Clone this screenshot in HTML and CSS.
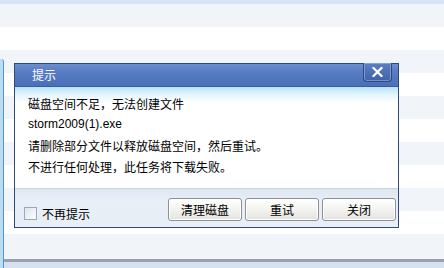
FILE: index.html
```html
<!DOCTYPE html>
<html lang="zh-CN">
<head>
<meta charset="utf-8">
<link rel="stylesheet" href="styles.css">
</head>
<body>
<div class="page">
  <div class="topstrip"></div>
  <div class="rows">
    <div class="row alt"></div>
    <div class="row"></div>
    <div class="row alt"></div>
    <div class="row"></div>
    <div class="row alt"></div>
    <div class="row"></div>
    <div class="row alt"></div>
    <div class="row"></div>
    <div class="row alt"></div>
    <div class="row"></div>
    <div class="row alt last"></div>
  </div>
  <div class="bottombar"></div>
  <div class="sideedge"></div>

  <div class="dialog">
    <div class="titlebar">
      <span class="title">提示</span>
      <button class="close" aria-label="关闭">
        <svg width="11" height="10" viewBox="0 0 11 10"><path d="M1.5 1 L9.5 9 M9.5 1 L1.5 9" stroke="#fff" stroke-width="2.2" stroke-linecap="square"/></svg>
      </button>
    </div>
    <div class="content">
      <p class="line">磁盘空间不足，无法创建文件</p>
      <p class="line file">storm2009(1).exe</p>
      <p class="line">请删除部分文件以释放磁盘空间，然后重试。</p>
      <p class="line">不进行任何处理，此任务将下载失败。</p>
    </div>
    <div class="footer">
      <label class="check"><span class="box"></span>不再提示</label>
      <div class="buttons">
        <button class="btn">清理磁盘</button>
        <button class="btn">重试</button>
        <button class="btn">关闭</button>
      </div>
    </div>
  </div>
</div>
</body>
</html>
```

FILE: styles.css
```css
* { box-sizing: border-box; }
html, body { margin: 0; padding: 0; }
body {
  width: 444px;
  height: 268px;
  overflow: hidden;
  font-family: "Noto Sans CJK SC", "Liberation Sans", sans-serif;
  font-size: 12px;
  color: #000;
  background: #ffffff;
}
.page {
  position: relative;
  width: 444px;
  height: 268px;
  display: flex;
  flex-direction: column;
}
.topstrip { height: 4px; background: #d5e3f4; }
.rows { flex: 1; display: flex; flex-direction: column; }
.row { height: 23px; background: #ffffff; }
.row.alt { background: #f1f4f9; }
.row.last { flex: 1; }
.bottombar {
  height: 9px;
  border-top: 3px solid #96a2b2;
  background: #d8e2ee;
}
.sideedge {
  position: absolute;
  left: 0;
  top: 59px;
  bottom: 0;
  width: 4px;
  background: #bcdcf4;
  border-right: 1px solid #4d95d8;
  border-top-right-radius: 3px;
}

.dialog {
  position: absolute;
  left: 14px;
  top: 63px;
  width: 385px;
  height: 165px;
  border: 1px solid #2e4a76;
  background: #fff;
  display: flex;
  flex-direction: column;
}
.titlebar {
  position: relative;
  height: 23px;
  background: linear-gradient(#6d8fd0 0%, #5a7ec4 30%, #4b6fb7 100%);
  border-bottom: 1px solid #3c5d99;
  display: flex;
  align-items: center;
  padding-left: 17px;
}
.title {
  color: #fff;
  font-size: 12px;
  line-height: 1;
}
.close {
  position: absolute;
  top: -1px;
  right: 6px;
  width: 29px;
  height: 19px;
  padding: 0;
  border: 1px solid #2c4a84;
  border-top: none;
  border-radius: 0 0 4px 4px;
  background: linear-gradient(#5d7fc2, #3f61a6);
  box-shadow: inset 0 0 0 1px rgba(160, 185, 230, 0.55);
  display: flex;
  align-items: center;
  justify-content: center;
}
.content {
  height: 101px;
  padding: 6px 0 0 13px;
  background: linear-gradient(#b6e2f8 0px, #e6f6fd 8px, #ffffff 16px);
}
.line {
  margin: 0;
  height: 21px;
  line-height: 21px;
  white-space: nowrap;
}
.line.file {
  font-family: "Liberation Sans", sans-serif;
  font-size: 12px;
}
.footer {
  flex: 1;
  display: flex;
  align-items: center;
  justify-content: space-between;
  padding: 1px 2px 0 9px;
  background: linear-gradient(#dde6f2, #e9eff7 30%, #e8eef6);
  border-top: 1px solid #c9d4e3;
}
.check {
  display: flex;
  align-items: center;
  gap: 5px;
  margin-top: 10px;
}
.box {
  width: 13px;
  height: 13px;
  border: 1px solid #97a9c0;
  background: linear-gradient(135deg, #dfe5ee, #fbfcfd);
}
.buttons {
  display: flex;
  gap: 3px;
  margin-top: 2px;
}
.btn {
  width: 74px;
  height: 23px;
  padding: 0;
  font-family: "Noto Sans CJK SC", sans-serif;
  font-size: 12px;
  color: #000;
  border: 1px solid #8d9097;
  border-radius: 3px;
  background: linear-gradient(#ffffff 0%, #f4f4f2 45%, #e3e3de 100%);
  box-shadow: inset 0 0 0 1px #ffffff;
  line-height: 21px;
}
```
